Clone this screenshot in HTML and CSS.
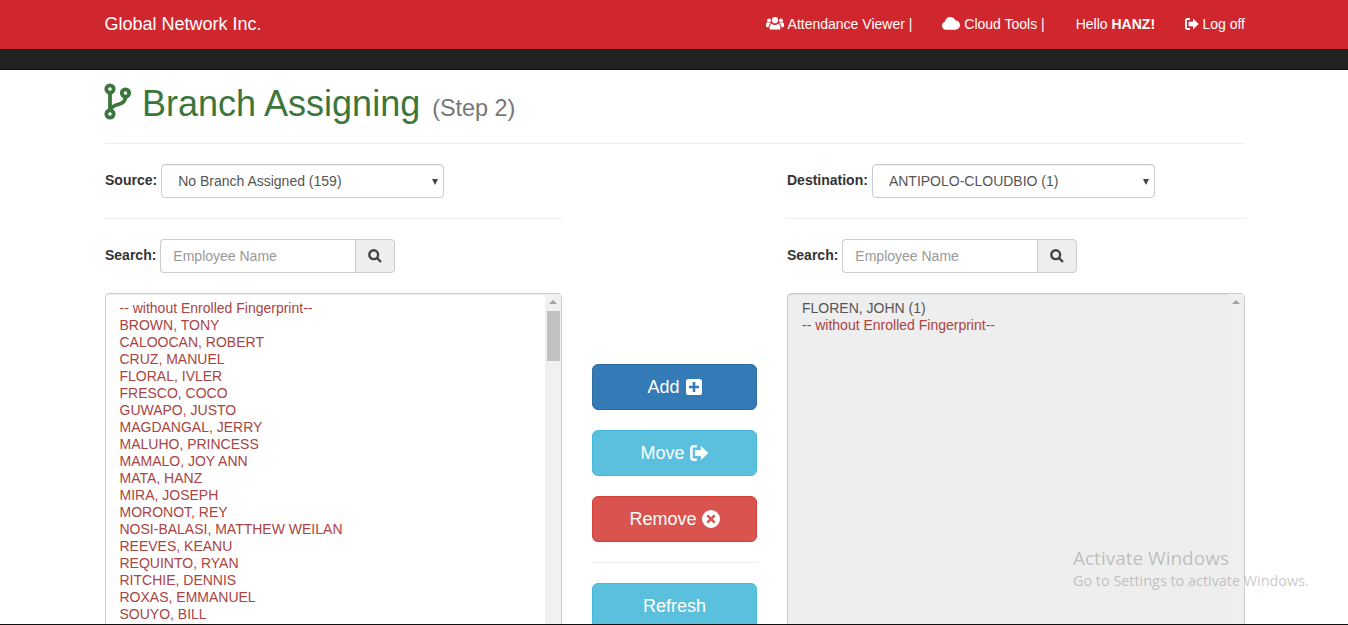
FILE: index.html
```html
<!DOCTYPE html>
<html>
    <head>
        <meta charset="utf-8">
        <meta name="viewport" content="width=device-width, initial-scale=1">
        <title>Branch Assigning</title>
        <link rel="stylesheet" href="styles.css">
    </head>
    <body>
        <div class="topbar">
            <div class="container topbar-inner">
                <a class="brand" href="#">Global Network Inc.</a>
                <div class="topnav">
                    <a href="#">
                        <svg class="ico ico-users" viewBox="0 0 18 13"><circle cx="9" cy="3.2" r="3.1"/><circle cx="3" cy="3.4" r="2"/><circle cx="15" cy="3.4" r="2"/><path d="M4.600 12.600c-.7 0-1-.5-1-1.100 0-2.600.6-4.600 2.400-4.600.7.500 1.800 1 3 1s2.300-.5 3-1c1.800 0 2.400 2 2.400 4.600 0 .6-.3 1.100-1 1.100z"/><path d="M0 8c0-1.600.5-2.700 1.500-2.700.5.400 1.200.7 2 .7.500 0 .9 0 1.200-.2-.2.500-.1.800.3.800-1.600.6-2.300 2-2.400 3.600H1c-.6 0-1-.5-1-2.200zM18 8c0-1.600-.5-2.700-1.500-2.700-.5.400-1.200.7-2 .7-.5 0-.9 0-1.200-.2.200.500.100.800-.3.800 1.600.6 2.300 2 2.400 3.600H17c.6 0 1-.5 1-2.200z"/></svg>
                        Attendance Viewer |
                    </a>
                    <a href="#">
                        <svg class="ico ico-cloud" viewBox="0 0 18 13"><path d="M4.200 12.800C1.900 12.800 0 11 0 8.700c0-1.800 1.200-3.400 2.900-3.900C3.300 2 5.600 0 8.400 0c2.300 0 4.300 1.400 5.100 3.500 2.500 0 4.500 2 4.500 4.600s-2.100 4.700-4.600 4.700z"/></svg>
                        Cloud Tools |
                    </a>
                    <a class="hello" href="#">Hello <b>HANZ!</b></a>
                    <a href="#">
                        <svg class="ico ico-signout" viewBox="0 0 14 12"><path d="M5 0H2.400C1 0 0 1 0 2.400v7.200C0 11 1 12 2.400 12H5v-1.900H2.600c-.4 0-.7-.3-.7-.7V2.600c0-.4.300-.7.700-.7H5z"/><path d="M8 .6 13.600 6 8 11.400V8.200H3.600V3.800H8z"/></svg>
                        Log off
                    </a>
                </div>
            </div>
        </div>
        <div class="subbar"></div>

        <div class="container">
            <h1 class="title">
                <svg class="ico-branch" viewBox="0 0 28 37"><circle cx="6" cy="6" r="3.700"/><circle cx="6" cy="31" r="3.700"/><circle cx="21.500" cy="10" r="3.700"/><path d="M6 9.700v17.600"/><path d="M21.500 13.700c0 5-3 6.600-7.500 7.800-4 1-6.500 2-8 5.800"/></svg>
                Branch Assigning <small>(Step 2)</small>
            </h1>
            <hr class="title-rule">

            <div class="columns">
                <div class="side">
                    <div class="field">
                        <label>Source:</label>
                        <div class="picker"><select><option>No Branch Assigned (159)</option></select></div>
                    </div>
                    <hr class="side-rule">
                    <div class="field">
                        <label>Search:</label>
                        <div class="search">
                            <input type="text" placeholder="Employee Name">
                            <button type="button"><svg viewBox="0 0 14 14"><circle cx="5.700" cy="5.700" r="4.400"/><path d="M9 9l4 4"/></svg></button>
                        </div>
                    </div>
                    <div class="list">
                        <div class="rows danger">
                            <div>-- without Enrolled Fingerprint--</div>
                            <div>BROWN, TONY</div>
                            <div>CALOOCAN, ROBERT</div>
                            <div>CRUZ, MANUEL</div>
                            <div>FLORAL, IVLER</div>
                            <div>FRESCO, COCO</div>
                            <div>GUWAPO, JUSTO</div>
                            <div>MAGDANGAL, JERRY</div>
                            <div>MALUHO, PRINCESS</div>
                            <div>MAMALO, JOY ANN</div>
                            <div>MATA, HANZ</div>
                            <div>MIRA, JOSEPH</div>
                            <div>MORONOT, REY</div>
                            <div>NOSI-BALASI, MATTHEW WEILAN</div>
                            <div>REEVES, KEANU</div>
                            <div>REQUINTO, RYAN</div>
                            <div>RITCHIE, DENNIS</div>
                            <div>ROXAS, EMMANUEL</div>
                            <div>SOUYO, BILL</div>
                        </div>
                        <div class="scroll"><span class="arrow"></span><span class="thumb"></span></div>
                    </div>
                </div>

                <div class="actions">
                    <button class="btn btn-blue" type="button">Add
                        <svg viewBox="0 0 16 16"><path fill-rule="evenodd" d="M2.600 0h10.800A2.600 2.600 0 0 1 16 2.600v10.800a2.600 2.600 0 0 1-2.600 2.600H2.600A2.600 2.600 0 0 1 0 13.400V2.600A2.600 2.600 0 0 1 2.600 0zM6.700 3v3.700H3v2.600h3.700V13h2.600V9.300H13V6.700H9.300V3z"/></svg>
                    </button>
                    <button class="btn btn-cyan" type="button">Move
                        <svg class="wide" viewBox="0 0 14 12"><path d="M5 0H2.400C1 0 0 1 0 2.400v7.200C0 11 1 12 2.400 12H5v-1.900H2.600c-.4 0-.7-.3-.7-.7V2.600c0-.4.300-.7.700-.7H5z"/><path d="M8 .6 13.600 6 8 11.400V8.200H3.600V3.800H8z"/></svg>
                    </button>
                    <button class="btn btn-red" type="button">Remove
                        <svg class="round" viewBox="0 0 18 18"><path fill-rule="evenodd" d="M9 0a9 9 0 1 1 0 18A9 9 0 0 1 9 0zM6.200 4.400 4.400 6.200 7.200 9l-2.800 2.800 1.800 1.800L9 10.800l2.800 2.800 1.800-1.800L10.800 9l2.800-2.800-1.800-1.800L9 7.200z"/></svg>
                    </button>
                    <hr class="actions-rule">
                    <button class="btn btn-cyan" type="button">Refresh</button>
                </div>

                <div class="side">
                    <div class="field">
                        <label>Destination:</label>
                        <div class="picker"><select><option>ANTIPOLO-CLOUDBIO (1)</option></select></div>
                    </div>
                    <hr class="side-rule">
                    <div class="field">
                        <label>Search:</label>
                        <div class="search">
                            <input type="text" placeholder="Employee Name">
                            <button type="button"><svg viewBox="0 0 14 14"><circle cx="5.700" cy="5.700" r="4.400"/><path d="M9 9l4 4"/></svg></button>
                        </div>
                    </div>
                    <div class="list list-off">
                        <div class="rows">
                            <div>FLOREN, JOHN (1)</div>
                            <div class="danger">-- without Enrolled Fingerprint--</div>
                        </div>
                        <div class="scroll"><span class="arrow"></span></div>
                    </div>
                </div>
            </div>
        </div>

        <div class="watermark">
            <div class="wm-big">Activate Windows</div>
            <div>Go to Settings to activate Windows.</div>
        </div>
    </body>
</html>
```

FILE: styles.css
```css
html, body {
    height: 625px;
    overflow: hidden;
}
body {
    margin: 0;
    font-family: "Liberation Sans", Arial, sans-serif;
    font-size: 14px;
    color: #333;
    background: #fff;
    border-bottom: 1px solid #111;
    box-sizing: border-box;
    position: relative;
}
.container {
    width: 1140px;
    margin-left: 105px;
}
.topbar {
    height: 49px;
    background: #d0272f;
    border-bottom: 1px solid #111;
}
.topbar-inner {
    display: flex;
    justify-content: space-between;
    align-items: center;
    height: 48px;
}
.brand {
    color: #fff;
    font-size: 18px;
    text-decoration: none;
    margin-left: -.5px;
}
.topnav {
    display: flex;
    gap: 30px;
}
.topnav a {
    color: #fff;
    text-decoration: none;
}
.topnav .hello {
    margin: 0 -.5px 0 1px;
}
.ico {
    fill: #fff;
    vertical-align: -1px;
}
.ico-users {
    width: 18px;
    height: 13px;
}
.ico-cloud {
    width: 18px;
    height: 13px;
}
.ico-signout {
    width: 14px;
    height: 12px;
}
.subbar {
    height: 19px;
    background: #222;
    border-bottom: 1px solid #111;
}

.title {
    margin: 0;
    padding-top: 12px;
    height: 61px;
    font-size: 36px;
    font-weight: 400;
    line-height: 43px;
    color: #3c763d;
}
.title small {
    font-size: 23.4px;
    color: #777;
    margin-left: 2px;
}
.ico-branch {
    width: 28px;
    height: 37px;
    margin-left: -1px;
    fill: none;
    stroke: #3c763d;
    stroke-width: 3.800;
    vertical-align: -4px;
}
.title-rule {
    margin: 0 0 20px;
    border: 0;
    border-top: 1px solid #eee;
}

.columns {
    display: grid;
    grid-template-columns: 457px 165px 458px;
    column-gap: 30px;
}
.field {
    display: flex;
    align-items: center;
    gap: 4px;
}
.field label {
    font-weight: 700;
    color: #333;
    padding-bottom: 2px;
}
.picker {
    position: relative;
    width: 283px;
    height: 34px;
}
.picker::after {
    content: "";
    position: absolute;
    right: 6px;
    top: 15px;
    border: 3.500px solid transparent;
    border-bottom: 0;
    border-top: 6px solid #444;
}
.picker select {
    appearance: none;
    display: block;
    width: 100%;
    height: 34px;
    padding: 6px 16px;
    font: 14px "Liberation Sans", Arial, sans-serif;
    color: #555;
    background: #fff;
    border: 1px solid #ccc;
    border-radius: 4px;
    box-shadow: inset 0 1px 1px rgba(0, 0, 0, .075);
}
.side-rule {
    margin: 20px 0;
    border: 0;
    border-top: 1px solid #eee;
}
.search {
    display: flex;
}
.search input {
    width: 195px;
    height: 34px;
    box-sizing: border-box;
    padding: 6px 12px;
    font: 14px "Liberation Sans", Arial, sans-serif;
    border: 1px solid #ccc;
    border-right: 0;
    border-radius: 4px 0 0 4px;
}
.search input::placeholder {
    color: #999;
}
.search button {
    width: 40px;
    height: 34px;
    padding: 0;
    background: #eee;
    border: 1px solid #ccc;
    border-radius: 0 4px 4px 0;
}
.search svg {
    width: 14px;
    height: 14px;
    fill: none;
    stroke: #444;
    stroke-width: 2.400;
    display: block;
    margin: 0 auto;
}

.list {
    margin-top: 20px;
    height: 340px;
    display: flex;
    justify-content: space-between;
    box-sizing: border-box;
    border: 1px solid #ccc;
    border-radius: 4px;
    box-shadow: inset 0 1px 1px rgba(0, 0, 0, .075);
    background: #fff;
}
.list-off {
    background: #eee;
}
.rows {
    padding: 6px 13.5px;
    line-height: 17px;
    color: #555;
}
.list-off .rows {
    padding-left: 14px;
}
.danger {
    color: #a94442;
}
.scroll {
    width: 16px;
    background: #f1f1f1;
    position: relative;
}
.list-off .scroll {
    width: 17px;
    background: #efefef;
}
.arrow {
    position: absolute;
    left: 4px;
    top: 6px;
    border: 4px solid transparent;
    border-top: 0;
    border-bottom: 4px solid #a3a3a3;
}
.list-off .arrow {
    left: 5px;
}
.thumb {
    display: block;
    position: absolute;
    top: 17px;
    left: 2px;
    right: 1px;
    height: 50px;
    background: #c1c1c1;
}

.actions {
    display: flex;
    flex-direction: column;
    padding-top: 200px;
}
.btn {
    height: 46px;
    flex: none;
    margin-bottom: 20px;
    font: 18px "Liberation Sans", Arial, sans-serif;
    color: #fff;
    border: 1px solid;
    border-radius: 6px;
}
.btn svg {
    width: 16px;
    height: 16px;
    margin-left: 1px;
    fill: currentColor;
    vertical-align: -2px;
}
.btn svg.wide {
    width: 19px;
    height: 16px;
    margin-left: 0;
}
.btn svg.round {
    width: 18px;
    height: 18px;
    margin-left: 0;
    vertical-align: -3px;
}
.btn-blue {
    background: #337ab7;
    border-color: #2e6da4;
}
.btn-cyan {
    background: #5bc0de;
    border-color: #46b8da;
}
.btn-red {
    background: #d9534f;
    border-color: #d43f3a;
}
.actions-rule {
    width: 100%;
    margin: 0 0 20px;
    border: 0;
    border-top: 1px solid #eee;
}

.watermark {
    position: absolute;
    left: 1073px;
    top: 546px;
    font-family: "Open Sans", sans-serif;
    font-size: 14.4px;
    color: rgba(120, 120, 120, .42);
    line-height: 21px;
}
.wm-big {
    font-size: 19px;
    line-height: 24px;
}
```
